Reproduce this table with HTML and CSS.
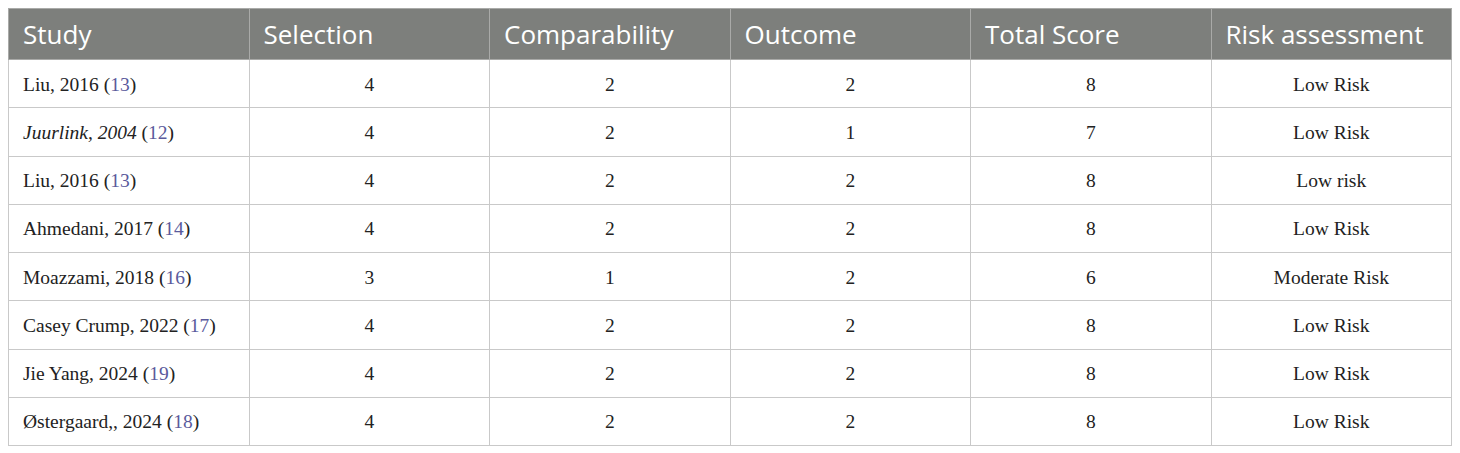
FILE: index.html
```html
<!DOCTYPE html>
<html>
<head>
<meta charset="utf-8">
<link rel="stylesheet" href="styles.css">
</head>
<body>
<table class="tbl">
  <colgroup>
    <col class="c"><col class="c"><col class="c"><col class="c"><col class="c"><col class="c">
  </colgroup>
  <thead>
    <tr>
      <th>Study</th><th>Selection</th><th>Comparability</th><th>Outcome</th><th>Total Score</th><th>Risk assessment</th>
    </tr>
  </thead>
  <tbody>
    <tr><td class="study">Liu, 2016 (<a class="ref">13</a>)</td><td>4</td><td>2</td><td>2</td><td>8</td><td>Low Risk</td></tr>
    <tr><td class="study"><i>Juurlink, 2004</i> (<a class="ref">12</a>)</td><td>4</td><td>2</td><td>1</td><td>7</td><td>Low Risk</td></tr>
    <tr><td class="study">Liu, 2016 (<a class="ref">13</a>)</td><td>4</td><td>2</td><td>2</td><td>8</td><td>Low risk</td></tr>
    <tr><td class="study">Ahmedani, 2017 (<a class="ref">14</a>)</td><td>4</td><td>2</td><td>2</td><td>8</td><td>Low Risk</td></tr>
    <tr><td class="study">Moazzami, 2018 (<a class="ref">16</a>)</td><td>3</td><td>1</td><td>2</td><td>6</td><td>Moderate Risk</td></tr>
    <tr><td class="study">Casey Crump, 2022 (<a class="ref">17</a>)</td><td>4</td><td>2</td><td>2</td><td>8</td><td>Low Risk</td></tr>
    <tr><td class="study">Jie Yang, 2024 (<a class="ref">19</a>)</td><td>4</td><td>2</td><td>2</td><td>8</td><td>Low Risk</td></tr>
    <tr><td class="study">Østergaard,, 2024 (<a class="ref">18</a>)</td><td>4</td><td>2</td><td>2</td><td>8</td><td>Low Risk</td></tr>
  </tbody>
</table>
</body>
</html>
```

FILE: styles.css
```css
html, body {
  margin: 0;
  padding: 0;
  background: #ffffff;
}
body {
  padding: 8px;
}
.tbl {
  width: 1444px;
  border-collapse: collapse;
  table-layout: fixed;
}
.tbl th {
  background: #7d7f7c;
  color: #ffffff;
  font-family: "Open Sans", sans-serif;
  font-weight: 400;
  font-size: 26px;
  text-align: left;
  padding: 0 14px;
  height: 51px;
  border: 1px solid #a9aaa8;
  box-sizing: border-box;
}
.tbl td {
  font-family: "Liberation Serif", serif;
  font-size: 19.5px;
  color: #222222;
  text-align: center;
  height: 48.25px;
  padding: 2px 14px 0;
  border: 1px solid #c9c9c9;
  box-sizing: border-box;
}
.tbl td.study {
  text-align: left;
}
.ref {
  color: #5a5a9c;
}
```
